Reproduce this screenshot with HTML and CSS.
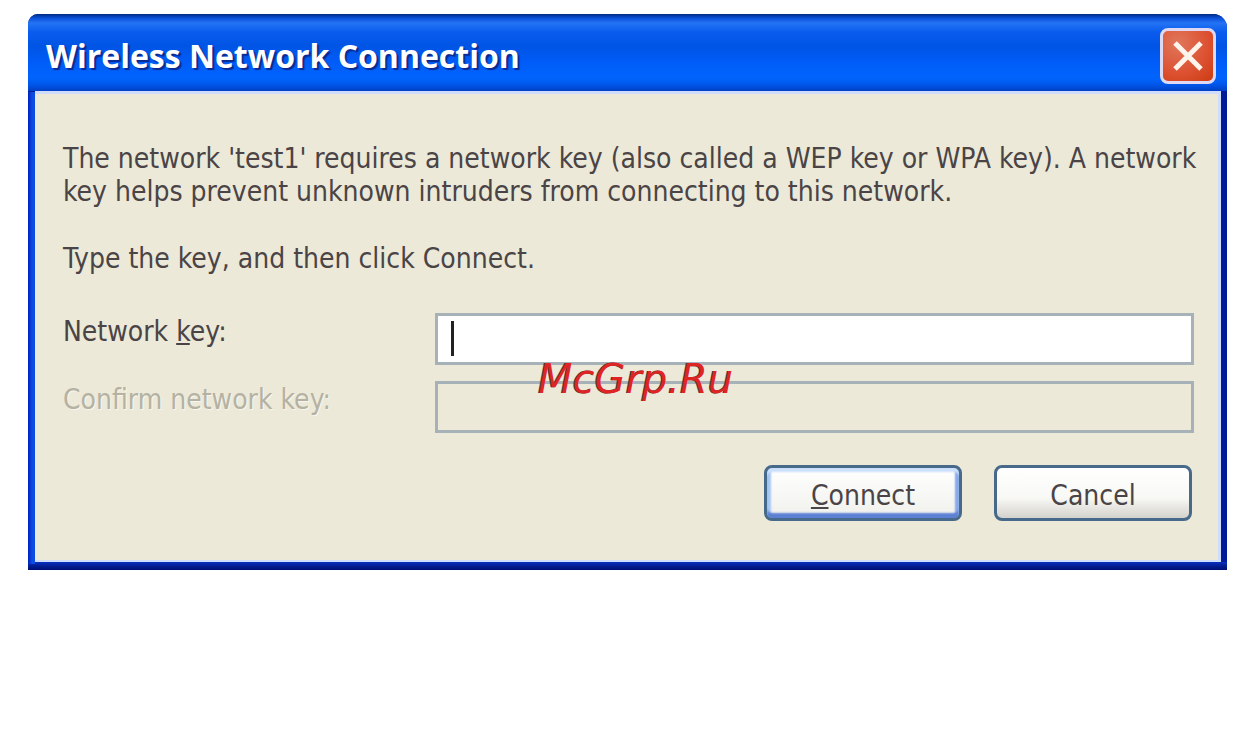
FILE: index.html
```html
<!DOCTYPE html>
<html lang="en">
<head>
<meta charset="utf-8">
<title>Wireless Network Connection</title>
<link rel="stylesheet" href="styles.css">
</head>
<body>
<main class="dialog" role="dialog" aria-labelledby="dialog-title">
  <header class="titlebar">
    <h1 class="title" id="dialog-title">Wireless Network Connection</h1>
    <button class="close" type="button" aria-label="Close">
      <svg class="close-icon" viewBox="0 0 32 32" aria-hidden="true"><path d="M3 3L29 29M29 3L3 29"/></svg>
    </button>
  </header>
  <form class="content">
    <p class="message">The network 'test1' requires a network key (also called a WEP key or WPA key). A network key helps prevent unknown intruders from connecting to this network.</p>
    <p class="message">Type the key, and then click Connect.</p>
    <div class="fields">
      <label class="label" for="key">Network <u>k</u>ey:</label>
      <div class="field"><input class="input" id="key" type="text"><span class="caret"></span></div>
      <label class="label disabled" for="confirm">Confirm network key:</label>
      <div class="field"><input class="input" id="confirm" type="text" disabled><span class="watermark">McGrp.Ru</span></div>
    </div>
    <div class="actions">
      <button class="button primary" type="submit"><span><u>C</u>onnect</span></button>
      <button class="button" type="button">Cancel</button>
    </div>
  </form>
</main>
</body>
</html>
```
FILE: styles.css
```css
* { box-sizing: border-box; }
body {
  margin: 0;
  padding: 14px 33px 0 28px;
  background: #fff;
  color: #4a4446;
  font: 28px/33px "DejaVu Sans Condensed", "Noto Sans", sans-serif;
}
.dialog {
  padding: 0 6px 8px 7px;
  border-radius: 10px 14px 0 0;
  background:
    linear-gradient(to right, #0020c0, #0c4ce0 4px, #0c4ce0 7px, transparent 7px) 0 78px / 7px calc(100% - 84px) no-repeat,
    linear-gradient(#0a2fc0, #001888 5px, #000e78) bottom / 100% 8px no-repeat,
    #001c98;
}
.titlebar {
  display: flex;
  align-items: center;
  justify-content: space-between;
  height: 77px;
  margin: 0 -6px 0 -7px;
  padding: 6px 11px 0 18px;
  border-radius: 10px 14px 0 0;
  background: linear-gradient(#002a80, #0a50d8 4px, #2474f4 9px, #0a5cee 18px, #0054e4 32px, #005cf8 48px, #0064fc 64px, #0058ec 70px, #0040c4);
}
.title {
  margin: 0;
  color: #fff;
  font: bold 32px/42px "Open Sans", sans-serif;
  text-shadow: 2px 2px 1px #0a2a90;
}
.close {
  display: grid;
  place-items: center;
  width: 56px;
  height: 56px;
  padding: 0;
  border: 3px solid #dfd8f4;
  border-radius: 8px;
  background: radial-gradient(circle at 30% 25%, #e0775c, #dc5030 60%, #cc3c10);
}
.close-icon {
  width: 32px;
  height: 32px;
  fill: none;
  stroke: #fff4ec;
  stroke-width: 5;
}
.content {
  padding: 48px 12px 39px 28px;
  border: solid #d0dcfc;
  border-width: 3px 3px 2px 0;
  background: #ece9d8;
}
.message { margin: 0 0 34px; }
.fields {
  display: grid;
  grid-template-columns: 372px 1fr;
  row-gap: 16px;
  padding: 4px 12px 0 0;
}
.label { padding-top: 2px; }
.disabled { color: #b5b2a3; text-shadow: 1px 1px 0 #f8f6ec; }
.field { position: relative; }
.input {
  display: block;
  width: 100%;
  height: 52px;
  padding: 4px 14px;
  border: 3px solid #a6b2b8;
  border-radius: 0;
  background: #fff;
  color: inherit;
  font: inherit;
}
.input:disabled { background: #ece9d8; }
.caret {
  position: absolute;
  left: 16px;
  top: 8px;
  width: 3px;
  height: 35px;
  background: #222;
}
.watermark {
  position: absolute;
  left: 103px;
  top: -22px;
  color: #de2524;
  font: italic 40px/40px "DejaVu Sans", sans-serif;
  text-shadow: -1px 0 0 #444;
}
.actions {
  display: flex;
  justify-content: flex-end;
  gap: 32px;
  padding: 32px 14px 0 0;
}
.button {
  width: 198px;
  height: 56px;
  padding: 4px 0 0;
  border: 3px solid #47698a;
  border-radius: 8px;
  background: linear-gradient(#fff, #f8f8f5 60%, #d4d2cc);
  color: inherit;
  font: inherit;
}
.primary {
  background: linear-gradient(#fff, #f0f0ec);
  box-shadow: inset 0 4px 2px #cce0fc, inset 0 -5px 2px #5c80d4, inset 4px 0 2px #a8c8f4, inset -4px 0 2px #84a8e8;
}
```
